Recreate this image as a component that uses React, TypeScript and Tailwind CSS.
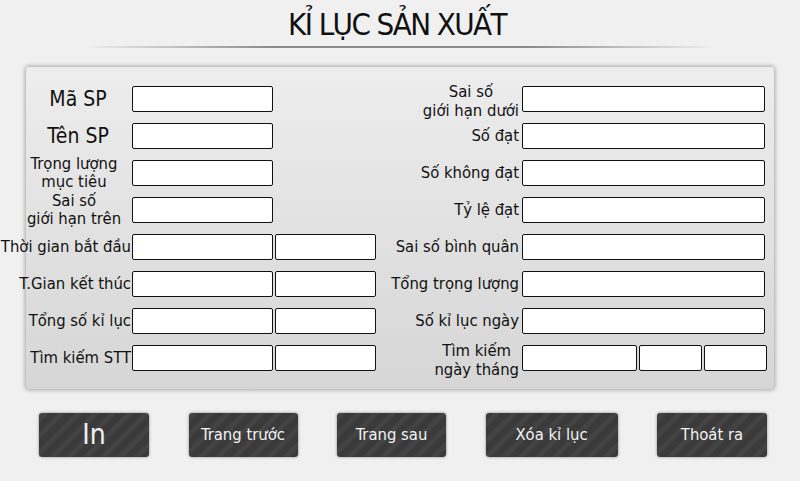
import React from "react";

const font = { fontFamily: '"DejaVu Sans Condensed", "DejaVu Sans", sans-serif' };

function Box({ w }: { w: string }) {
  return <div className={`${w} h-[26px] shrink-0 rounded-[2px] border border-[#111] bg-white`} />;
}

function LeftRow({
  label,
  children,
  kind,
}: {
  label: React.ReactNode;
  children: React.ReactNode;
  kind: "big" | "two" | "right";
}) {
  return (
    <div className="flex h-[26px] items-center">
      <div
        className={
          kind === "right"
            ? "flex w-[106px] shrink-0 justify-end pr-[1px] whitespace-nowrap text-[16.5px] leading-[18px]"
            : kind === "big"
            ? "flex w-[106px] shrink-0 justify-center pr-[2px] whitespace-nowrap text-[21px] leading-[24px]"
            : "flex w-[106px] shrink-0 justify-center pr-[10px] whitespace-nowrap text-center text-[16.5px] leading-[18px]"
        }
      >
        <div>{label}</div>
      </div>
      {children}
    </div>
  );
}

function RightRow({ label, children, two }: { label: React.ReactNode; children: React.ReactNode; two?: boolean }) {
  return (
    <div className="flex h-[26px] items-center">
      <div className="flex w-[146px] shrink-0 justify-end pr-[3px] whitespace-nowrap">
        <div className={two ? "pt-[4px] text-center text-[16.5px] leading-[19px]" : "text-[16.5px] leading-[18px]"}>{label}</div>
      </div>
      {children}
    </div>
  );
}

function Btn({ w, children, big }: { w: string; children: React.ReactNode; big?: boolean }) {
  return (
    <div
      className={`${w} flex h-[44px] items-center justify-center rounded-[3px] text-[#f2f2f2] shadow-[0_0_3px_rgba(0,0,0,0.45)] bg-[repeating-linear-gradient(-45deg,#3a3a3a_0px,#3a3a3a_5px,#434343_7px,#434343_10px,#3a3a3a_12px)] ${
        big ? "text-[28px]" : "text-[16.5px]"
      }`}
    >
      {children}
    </div>
  );
}

export default function App() {
  return (
    <div className="h-[481px] w-[800px] overflow-hidden bg-[#f0f0f0] text-[#111]" style={font}>
      <div className="flex h-[46px] items-center justify-center pt-[2px] pr-[6px] text-[31px] tracking-[-1.6px] text-[#111]">
        KỈ LỤC SẢN XUẤT
      </div>
      <div className="mx-[84px] h-[2px] bg-[linear-gradient(90deg,rgba(140,140,140,0)_0%,#8a8a8a_30%,#8a8a8a_70%,rgba(140,140,140,0)_100%)]" />
      <div className="mx-[25px] mt-[18px] flex h-[324px] rounded-[4px] border border-[#c4c4c4] bg-[linear-gradient(180deg,#ededed_0%,#d6d6d6_100%)] pt-[19px] shadow-[0_0_4px_rgba(0,0,0,0.3)]">
        <div className="flex w-[350px] flex-col gap-[11px]">
          <LeftRow label="Mã SP" kind="big">
            <Box w="w-[141px]" />
          </LeftRow>
          <LeftRow label="Tên SP" kind="big">
            <Box w="w-[141px]" />
          </LeftRow>
          <LeftRow
            label={
              <>
                Trọng lượng
                <br />
                mục tiêu
              </>
            }
            kind="two"
          >
            <Box w="w-[141px]" />
          </LeftRow>
          <LeftRow
            label={
              <>
                Sai số
                <br />
                giới hạn trên
              </>
            }
            kind="two"
          >
            <Box w="w-[141px]" />
          </LeftRow>
          {["Thời gian bắt đầu", "T.Gian kết thúc", "Tổng số kỉ lục", "Tìm kiếm STT"].map((l) => (
            <LeftRow key={l} label={l} kind="right">
              <div className="flex gap-[2px]">
                <Box w="w-[141px]" />
                <Box w="w-[101px]" />
              </div>
            </LeftRow>
          ))}
        </div>
        <div className="flex w-[390px] flex-col gap-[11px]">
          <RightRow
            two
            label={
              <>
                Sai số
                <br />
                giới hạn dưới
              </>
            }
          >
            <Box w="w-[243px]" />
          </RightRow>
          {["Số đạt", "Số không đạt", "Tỷ lệ đạt", "Sai số bình quân", "Tổng trọng lượng", "Số kỉ lục ngày"].map((l) => (
            <RightRow key={l} label={l}>
              <Box w="w-[243px]" />
            </RightRow>
          ))}
          <RightRow
            two
            label={
              <>
                Tìm kiếm
                <br />
                ngày tháng
              </>
            }
          >
            <div className="flex gap-[2px]">
              <Box w="w-[115px]" />
              <Box w="w-[63px]" />
              <Box w="w-[63px]" />
            </div>
          </RightRow>
        </div>
      </div>
      <div className="mt-[23px] flex justify-between pl-[39px] pr-[33px]">
        <Btn w="w-[110px]" big>
          In
        </Btn>
        <Btn w="w-[109px]">Trang trước</Btn>
        <Btn w="w-[109px]">Trang sau</Btn>
        <Btn w="w-[132px]">Xóa kỉ lục</Btn>
        <Btn w="w-[110px]">Thoát ra</Btn>
      </div>
    </div>
  );
}
